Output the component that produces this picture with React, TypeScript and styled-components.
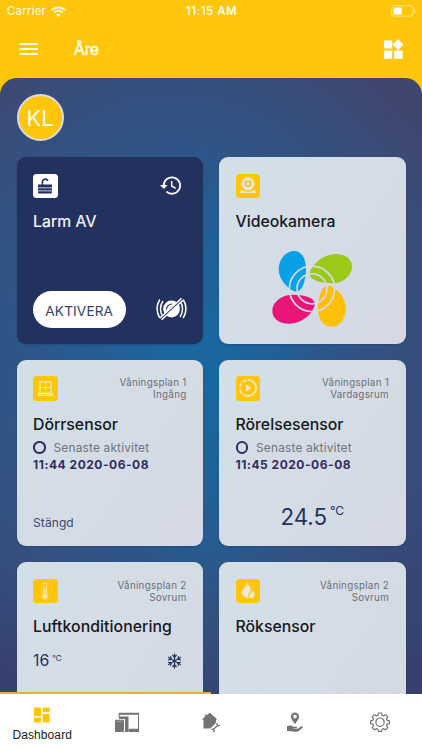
import React from "react";
import styled, { createGlobalStyle } from "styled-components";

const YELLOW = "#ffc60b";
const NAVY = "#23315f";

const GlobalStyle = createGlobalStyle`
  * { box-sizing: border-box; }
  body { margin: 0; font-family: Inter, "Liberation Sans", sans-serif; overflow: hidden; }
  svg { display: block; flex: none; }
`;

const Screen = styled.div`
  width: 422px;
  height: 750px;
  overflow: hidden;
  display: flex;
  flex-direction: column;
  background: ${YELLOW};
`;

const StatusBar = styled.div`
  height: 22px;
  flex: none;
  display: grid;
  grid-template-columns: 1fr auto 1fr;
  align-items: center;
  padding: 0 6px 0 7px;
  color: #fffbea;
  font-size: 11.5px;
  line-height: 22px;
`;
const Carrier = styled.div`
  display: flex;
  align-items: center;
  gap: 5px;
  letter-spacing: 0.2px;
`;
const Clock = styled.div`
  font-weight: 600;
  font-size: 11.5px;
  letter-spacing: 0.5px;
`;
const Battery = styled.div`
  justify-self: end;
`;

const Header = styled.header`
  height: 56px;
  flex: none;
  display: flex;
  align-items: center;
  padding: 0 18px 2px 19px;
`;
const Place = styled.h1`
  margin: 1px 0 0 36px;
  flex: 1;
  color: #fffbea;
  font: 400 16px/20px "Liberation Sans", sans-serif;
  -webkit-text-stroke: 0.5px #fffbea;
`;

const Panel = styled.main`
  flex: 1;
  min-height: 0;
  overflow: hidden;
  border-radius: 17px 17px 0 0;
  padding: 16px 16.5px 0;
  background:
    radial-gradient(ellipse 110px 240px at 212px 300px, rgba(20, 107, 163, 0.75), rgba(20, 107, 163, 0) 100%),
    radial-gradient(ellipse 300px 370px at 175px 280px, #206399 0%, #275b91 35%, #34517f 70%, rgba(61, 71, 111, 0) 100%),
    linear-gradient(#3f476f, #3a4b7c 60%, #36406f);
`;
const Avatar = styled.div`
  width: 47px;
  height: 47px;
  border-radius: 50%;
  border: 2px solid #dcdce0;
  background: ${YELLOW};
  color: #fffdf0;
  font-size: 21.8px;
  display: flex;
  align-items: center;
  justify-content: center;
`;
const Grid = styled.div`
  margin-top: 16px;
  display: grid;
  grid-template-columns: 186.5px 186.5px;
  grid-auto-rows: 186.5px;
  gap: 16px;
`;
const Card = styled.section<{ $dark?: boolean }>`
  border-radius: 9px;
  padding: 16.5px 16.5px 14px;
  background: ${(p) => (p.$dark ? NAVY : "linear-gradient(125deg, #d3dfe7, #d5d9e3)")};
  color: ${(p) => (p.$dark ? "#f8fafc" : "#15171d")};
  display: flex;
  flex-direction: column;
  box-shadow: 0 1px 2px rgba(20, 35, 75, 0.25);
`;
const CardTop = styled.div`
  height: 24.5px;
  display: flex;
  justify-content: space-between;
`;
const Tile = styled.div<{ $white?: boolean }>`
  width: 24.5px;
  height: 24.5px;
  border-radius: 3.5px;
  background: ${(p) => (p.$white ? "#fff" : YELLOW)};
  display: flex;
  align-items: center;
  justify-content: center;
`;
const Location = styled.div`
  padding-top: 1px;
  text-align: right;
  color: #6a6f77;
  font-size: 9.8px;
  line-height: 12px;
  letter-spacing: 0.28px;
  white-space: nowrap;
`;
const HistorySlot = styled.div`
  padding: 0 5px 0 0;
`;
const Title = styled.h2<{ $track?: number }>`
  margin: 13px 0 0;
  font-size: 15.8px;
  line-height: 22px;
  font-weight: 500;
  letter-spacing: ${(p) => p.$track ?? 0}px;
  white-space: nowrap;
`;
const DarkTitle = styled(Title)`
  letter-spacing: 0.05px;
  -webkit-text-stroke: 0.2px #f8fafc;
  font-weight: 400;
`;
const Activity = styled.div`
  margin-top: 3.5px;
  display: flex;
  align-items: center;
  gap: 8px;
  color: #6e747d;
  font-size: 11.9px;
  line-height: 17px;
  letter-spacing: 0.18px;
  white-space: nowrap;
`;
const Dot = styled.i`
  width: 12.5px;
  height: 12.5px;
  border: 2px solid #302b60;
  border-radius: 50%;
`;
const Stamp = styled.time`
  font-size: 12px;
  line-height: 17px;
  font-weight: 650;
  color: #302b60;
  letter-spacing: 0.52px;
  white-space: nowrap;
`;
const State = styled.div`
  margin-top: auto;
  color: #3b4775;
  font-size: 12px;
  line-height: 18px;
  letter-spacing: 0.1px;
`;
const AlarmFooter = styled.div`
  margin-top: auto;
  display: flex;
  align-items: center;
  justify-content: space-between;
  padding-bottom: 2px;
`;
const ActivateButton = styled.button`
  width: 92.5px;
  height: 37px;
  padding: 3px 0 0;
  border: 0;
  border-radius: 19px;
  background: #fff;
  color: #34416e;
  font-family: inherit;
  font-size: 13.6px;
  letter-spacing: 0.15px;
`;
const LogoSlot = styled.div`
  display: flex;
  justify-content: center;
  margin-top: 15px;
`;
const Reading = styled.div`
  margin-top: auto;
  align-self: center;
  display: flex;
  align-items: flex-start;
  gap: 3px;
  color: ${NAVY};
  font-size: 22.3px;
  line-height: 28px;
  padding-bottom: 1px;
`;
const ReadingUnit = styled.span`
  font-size: 12px;
  line-height: 14px;
  margin-top: 0.5px;
`;
const ClimateRow = styled.div`
  margin-top: 13px;
  padding-right: 5px;
  display: flex;
  align-items: center;
  justify-content: space-between;
  color: ${NAVY};
`;
const Setting = styled.div`
  display: flex;
  font-size: 15.8px;
  line-height: 20px;
  gap: 3px;
`;
const SettingUnit = styled.span`
  font-size: 8px;
  line-height: 15px;
`;

const TabBar = styled.nav`
  position: relative;
  height: 56px;
  flex: none;
  background: #fff;
  display: grid;
  grid-template-columns: repeat(5, 1fr);
`;
const Progress = styled.div`
  position: absolute;
  top: -2px;
  left: 0;
  width: 211px;
  height: 2px;
  background: #e5b526;
`;
const Tab = styled.div<{ $active?: boolean }>`
  display: flex;
  flex-direction: column;
  align-items: center;
  justify-content: ${(p) => (p.$active ? "flex-start" : "center")};
  gap: 4px;
  padding-top: ${(p) => (p.$active ? "13px" : "0")};
  color: #747474;
`;
const TabLabel = styled.span`
  font: 12px/16px "Liberation Sans", sans-serif;
  letter-spacing: 0.1px;
  color: #202020;
`;

const WifiIcon = () => (
  <svg width="15" height="11" viewBox="0 0 15 11" fill="none" stroke="#fffbea" strokeWidth="2">
    <path d="M1 4.100a9.300 9.300 0 0 1 13 0M3.300 6.500a6 6 0 0 1 8.400 0" />
    <path d="M7.500 11 5.200 8.700a3.300 3.300 0 0 1 4.600 0z" fill="#fffbea" stroke="none" />
  </svg>
);
const BatteryIcon = () => (
  <svg width="25" height="12" viewBox="0 0 25 12">
    <rect x=".7" y=".7" width="21.5" height="10.4" rx="2.6" fill="none" stroke="#ffe58a" strokeWidth="1" />
    <rect x="2.5" y="2.4" width="8.3" height="7" rx="1" fill="#fff" />
    <path d="M23.4 4.1c1.5.6 1.5 3 0 3.6z" fill="#ffe58a" />
  </svg>
);
const MenuIcon = () => (
  <svg width="19" height="14" viewBox="0 0 19 14" stroke="#fffae0" strokeWidth="2">
    <path d="M.5 2h18.300M.5 7h18.300M.5 12h18.300" />
  </svg>
);
const WidgetsIcon = () => (
  <svg width="21" height="21" viewBox="0 0 21 21" fill="#fff">
    <path d="M1 1.500h8.300v8H1zM1 11.500h8.300v8.300H1zM11.200 11.500h8.400v8.300h-8.400zM15 0l5.500 5.500L15 11 9.500 5.500z" />
  </svg>
);
const LockIcon = () => (
  <svg width="16" height="18" viewBox="0 0 16 18">
    <path d="M5.400 8V5a2.900 2.900 0 0 1 5.500-1.200" fill="none" stroke={NAVY} strokeWidth="1.600" />
    <path d="M1 7.500h14v3H1zM1 11.200h14v2.300H1zM1 14.200h14v1a1.300 1.300 0 0 1-1.300 1.300H2.300A1.300 1.300 0 0 1 1 15.200z" fill={NAVY} />
  </svg>
);
const HistoryIcon = () => (
  <svg width="23" height="23" viewBox="0 0 23 23" fill="none" stroke="#fff" strokeWidth="1.8">
    <path d="M4.700 11.500a8.200 8.200 0 1 1 2.700 6.100" />
    <path d="M12.700 7v5l4 2.400" strokeWidth="1.500" />
    <path d="M1 11h7.600l-3.800 4.100z" fill="#fff" stroke="none" />
  </svg>
);
const SirenOffIcon = () => (
  <svg width="31" height="24" viewBox="0 0 31 24" fill="none" stroke="#fff" strokeWidth="1.500">
    <circle cx="15.500" cy="12" r="8.400" fill="#fff" stroke="none" />
    <path d="M3.800 2.500a17 17 0 0 0 0 18.500M7 4a14 14 0 0 0 0 16M27.200 2.500a17 17 0 0 1 0 18.500M24 4a14 14 0 0 1 0 16" />
    <path d="M10.500 12.500a5.500 5.500 0 0 1 5.500-5.500" stroke={NAVY} strokeWidth="1.200" />
    <path d="m4.800 21.700 21.500-19.500" stroke={NAVY} strokeWidth="3.400" />
    <path d="m5.600 22.700 21.300-19.300M4.100 20.900 25.600 1.300" strokeWidth="1.500" />
  </svg>
);
const CameraIcon = () => (
  <svg width="18" height="19" viewBox="0 0 18 19">
    <circle cx="9" cy="7.800" r="6.600" fill="#ece6ce" />
    <circle cx="9" cy="7.800" r="2.600" fill="none" stroke="#eab91f" strokeWidth="1.300" />
    <path d="M2.300 14c2 .2 3 1.700 6.700 1.700S13.700 14.200 15.700 14c1.500.8 1.500 3 .3 3H2c-1.200 0-1.200-2.200.3-3z" fill="#ece6ce" />
  </svg>
);
const WindowIcon = () => (
  <svg width="17" height="17" viewBox="0 0 17 17" fill="none" stroke="#efe8c5" strokeWidth="1.200">
    <path d="M3 1.800h11v11.500H3zM8.500 1.800v11.500M3 7.500h11M1.500 13.600h14v1.900h-14z" />
  </svg>
);
const MotionIcon = () => (
  <svg width="20" height="20" viewBox="0 0 20 20">
    <path d="M10 1.900a8.100 8.100 0 0 1 0 16.200" fill="none" stroke="#efe8c5" strokeWidth="1.800" />
    <path d="M10 18.100a8.100 8.100 0 0 1 0-16.200" fill="none" stroke="#efe8c5" strokeWidth="1.800" strokeDasharray="4.600 1.800" />
    <path d="m8 6.500 5.200 3.500L8 13.500z" fill="#efe8c5" />
  </svg>
);
const ThermoIcon = () => (
  <svg width="10" height="20" viewBox="0 0 10 20">
    <path d="M3.300 12.800V3.600a1.700 1.700 0 0 1 3.400 0v9.200a2.900 2.900 0 1 1-3.400 0z" fill="none" stroke="#efe8c5" strokeWidth=".9" />
    <path d="M5 7v7" stroke="#efe8c5" strokeWidth="1.200" />
    <circle cx="5" cy="15.200" r="2" fill="#efe8c5" />
  </svg>
);
const FireIcon = () => (
  <svg width="16" height="19" viewBox="0 0 16 19" fill="#efe8d5">
    <path d="M7.300 1c.2 3 4 4.400 3.400 8.200-.3 1.800-2.700 3.200-2.500 5.800.1.900.4 1.500.8 2-3.500.3-7-2-7.200-5.400C1.600 7.300 7.200 6.200 7.300 1z" />
    <path d="M12.300 8.600c.3 2 2.300 3.100 2.200 5.400-.1 1.900-1.300 3.100-3 3.200-1.600 0-2.400-1-2.300-2.300.1-2.200 3.300-3 3.100-6.300z" />
  </svg>
);
const CloverLogo = () => (
  <svg width="84" height="80" viewBox="165 294 252 240">
    <mask id="clover-rings">
      <path fill="#fff" d="M165 294h252v246H165z" />
      <g fill="none" stroke="#000" strokeWidth="5">
        <circle cx="291" cy="416.500" r="68" />
        <circle cx="291" cy="416.500" r="45" />
      </g>
    </mask>
    <g mask="url(#clover-rings)">
      <path fill="#09a0e5" d="M235 303c25-2 39 25 38 58-1 32-12 64-29 64-18 0-53-34-53-67 0-30 21-53 44-55z" />
      <path fill="#9bc918" d="M284 373c0-21 36-61 79-61 31 0 48 17 48 39 0 25-28 49-57 49-35 0-70-10-70-27z" />
      <path fill="#fdbf08" d="M340 407c22 0 53 36 53 69 0 31-21 54-44 54-26 0-40-25-40-57 0-33 12-66 31-66z" />
      <path fill="#e91678" d="M299 461c0 22-33 60-78 60-31 0-49-17-49-39 0-26 28-48 61-48 35 0 66 9 66 27z" />
    </g>
  </svg>
);
const SnowIcon = () => (
  <svg width="15" height="16" viewBox="0 0 15 16" fill="none" stroke={NAVY} strokeWidth="1.200">
    {[0, 60, 120, 180, 240, 300].map((angle) => (
      <path key={angle} d="M7.500 8V.5M5.400 2l2.100 2.300L9.600 2" transform={`rotate(${angle} 7.500 8)`} />
    ))}
  </svg>
);
const DashboardIcon = () => (
  <svg width="16" height="16" viewBox="0 0 16 16" fill={YELLOW}>
    <path d="M0 .5h7v8.400H0zM8.600.5h7v4.800h-7zM0 10.500h7v5H0zM8.600 7h7v8.500h-7z" />
  </svg>
);
const DevicesIcon = () => (
  <svg width="26" height="21" viewBox="0 0 26 21">
    <path d="M5.200 5V1.600h19.300v17H12" fill="none" stroke="currentColor" strokeWidth="1" />
    <path d="M4.700.8H25v2H4.700zM15 16.700h10v3.200H15z" fill="currentColor" />
    <path d="M5 4.500h9.500v15.400H11V7H5z" fill="currentColor" />
    <rect x="1" y="7.800" width="9" height="12.200" rx="1" fill="currentColor" />
    <path d="M2.500 9.300h6" stroke="#bbb" strokeWidth=".7" />
  </svg>
);
const HomeServiceIcon = () => (
  <svg width="20" height="21" viewBox="0 0 20 21" fill="currentColor">
    <path d="M8.700.8 16.500 7.500H15v3.300l-2.200 2.500-3.600 3.200H2.500V7.500H.7l3.200-2.700V2.600h1.700v.8z" />
    <path d="m12 17.800 5.200-4.700" fill="none" stroke="currentColor" strokeWidth="1.300" />
    <path d="m10.300 17.600 1.900-.4 1 1.300-.8 1.700M16.200 10.900l-.3 1.700 1.300 1.200 1.800-.6" fill="none" stroke="currentColor" strokeWidth="1.200" />
  </svg>
);
const HandPinIcon = () => (
  <svg width="18" height="21" viewBox="0 0 18 21" fill="currentColor">
    <path fillRule="evenodd" d="M9 .6a4.100 4.100 0 0 1 4.100 4.200C13.100 7.400 9 12 9 12S4.900 7.400 4.900 4.800A4.100 4.100 0 0 1 9 .6zm0 2.200a1.800 1.800 0 1 0 0 3.600 1.800 1.800 0 0 0 0-3.600z" />
    <path d="M1 14.300c3-1.300 4.600-.6 6.300.5h3c1 0 1 1.500 0 1.500H7.700v.5h3.600c2-.5 3.200-3 5-2.600.8.200.7 1 .2 1.500l-3.700 3.200c-2.300 1.300-5.400 1-8.200.4L1 18.900z" />
  </svg>
);
const SettingsIcon = () => (
  <svg width="20" height="20" viewBox="0 0 20 20" fill="none" stroke="currentColor" strokeWidth="1.200" strokeLinejoin="round">
    <path d="M8.400 1h3.200l.5 2.300 1.500.6 2-1.300 2.200 2.200-1.300 2 .6 1.500 2.300.5v2.800l-2.300.5-.6 1.600 1.300 2-2.200 2.200-2-1.300-1.500.6-.5 2.200H8.400l-.5-2.200-1.500-.6-2 1.300-2.200-2.200 1.300-2-.6-1.600-2.300-.5V8.800l2.300-.5.6-1.500-1.300-2 2.200-2.200 2 1.300 1.500-.6z" />
    <circle cx="10" cy="10.200" r="4.200" />
  </svg>
);

interface SensorProps {
  icon: React.ReactNode;
  floor: string;
  room: string;
  title: string;
  track?: number;
  children?: React.ReactNode;
}
const Sensor = ({ icon, floor, room, title, track, children }: SensorProps) => (
  <Card>
    <CardTop>
      <Tile>{icon}</Tile>
      <Location>{floor}<br />{room}</Location>
    </CardTop>
    <Title $track={track}>{title}</Title>
    {children}
  </Card>
);

export default function App() {
  return (
    <Screen>
      <GlobalStyle />
      <StatusBar>
        <Carrier>Carrier <WifiIcon /></Carrier>
        <Clock>11:15 AM</Clock>
        <Battery><BatteryIcon /></Battery>
      </StatusBar>
      <Header>
        <MenuIcon />
        <Place>Åre</Place>
        <WidgetsIcon />
      </Header>
      <Panel>
        <Avatar>KL</Avatar>
        <Grid>
          <Card $dark>
            <CardTop>
              <Tile $white><LockIcon /></Tile>
              <HistorySlot><HistoryIcon /></HistorySlot>
            </CardTop>
            <DarkTitle>Larm AV</DarkTitle>
            <AlarmFooter>
              <ActivateButton>AKTIVERA</ActivateButton>
              <SirenOffIcon />
            </AlarmFooter>
          </Card>
          <Card>
            <CardTop><Tile><CameraIcon /></Tile></CardTop>
            <Title>Videokamera</Title>
            <LogoSlot><CloverLogo /></LogoSlot>
          </Card>
          <Sensor icon={<WindowIcon />} floor="Våningsplan 1" room="Ingång" title="Dörrsensor">
            <Activity><Dot />Senaste aktivitet</Activity>
            <Stamp>11:44 2020-06-08</Stamp>
            <State>Stängd</State>
          </Sensor>
          <Sensor icon={<MotionIcon />} floor="Våningsplan 1" room="Vardagsrum" title="Rörelsesensor">
            <Activity><Dot />Senaste aktivitet</Activity>
            <Stamp>11:45 2020-06-08</Stamp>
            <Reading>24.5<ReadingUnit>°C</ReadingUnit></Reading>
          </Sensor>
          <Sensor icon={<ThermoIcon />} floor="Våningsplan 2" room="Sovrum" title="Luftkonditionering" track={0.06}>
            <ClimateRow>
              <Setting>16<SettingUnit>°C</SettingUnit></Setting>
              <SnowIcon />
            </ClimateRow>
          </Sensor>
          <Sensor icon={<FireIcon />} floor="Våningsplan 2" room="Sovrum" title="Röksensor" />
        </Grid>
      </Panel>
      <TabBar>
        <Progress />
        <Tab $active><DashboardIcon /><TabLabel>Dashboard</TabLabel></Tab>
        <Tab><DevicesIcon /></Tab>
        <Tab><HomeServiceIcon /></Tab>
        <Tab><HandPinIcon /></Tab>
        <Tab><SettingsIcon /></Tab>
      </TabBar>
    </Screen>
  );
}
